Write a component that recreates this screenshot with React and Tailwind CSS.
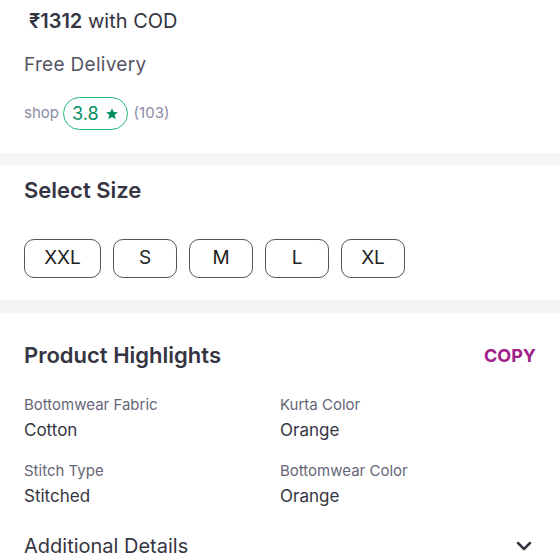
import { ChevronDown } from "lucide-react";

const sizes = [
  { label: "XXL", w: "w-[77px]" },
  { label: "S", w: "w-[64px]" },
  { label: "M", w: "w-[64px]" },
  { label: "L", w: "w-[64px]" },
  { label: "XL", w: "w-[64px]" },
];

const highlights = [
  { label: "Bottomwear Fabric", value: "Cotton" },
  { label: "Kurta Color", value: "Orange" },
  { label: "Stitch Type", value: "Stitched" },
  { label: "Bottomwear Color", value: "Orange" },
];

export default function App() {
  return (
    <div className="w-[560px] h-[560px] overflow-hidden bg-white text-[#353543]" style={{ fontFamily: "Inter, 'Noto Sans', sans-serif" }}>
      {/* price block */}
      <div className="px-6 pt-[8px] pb-[23px]">
        <div className="pl-[5px] text-[20px] leading-[26px]">
          <span className="font-semibold">₹1312</span> with COD
        </div>
        <div className="mt-[19px] text-[19px] leading-[24px] tracking-[0.3px] text-[#555566]">Free Delivery</div>
        <div className="mt-[20px] flex items-center gap-[4px]">
          <span className="text-[15px] text-[#8b8ba3]">shop</span>
          <span className="flex items-center gap-[6px] h-[33px] px-[8px] rounded-full border-[1.5px] border-[#23bb75] text-[#038d63] text-[18px]">
            3.8
            <svg width="14" height="14" viewBox="0 0 24 24" fill="#038d63">
              <path d="M12 2l2.9 6.6 7.1.6-5.4 4.7 1.6 7-6.2-3.7-6.2 3.7 1.6-7L2 9.2l7.1-.6z" />
            </svg>
          </span>
          <span className="ml-[2px] text-[15px] text-[#8b8ba3]">(103)</span>
        </div>
      </div>

      <div className="h-[12px] bg-[#f5f5f5]" />

      {/* size */}
      <div className="px-6 pt-[11px] pb-[22px]">
        <h2 className="text-[22px] leading-[28px] font-semibold">Select Size</h2>
        <div className="mt-[35px] flex gap-[12px]">
          {sizes.map((s) => (
            <div key={s.label} className={`${s.w} h-[39px] rounded-[10px] border border-[#555] flex items-center justify-center text-[19px] text-[#222]`}>
              {s.label}
            </div>
          ))}
        </div>
      </div>

      <div className="h-[13px] bg-[#f5f5f5]" />

      {/* highlights */}
      <div className="px-6 pt-[28px]">
        <div className="flex items-center justify-between">
          <h2 className="text-[22px] leading-[28px] font-semibold">Product Highlights</h2>
          <span className="text-[18px] font-bold text-[#9f2089]">COPY</span>
        </div>
        <div className="mt-[26px] grid grid-cols-2 gap-x-0 gap-y-[20px]">
          {highlights.map((h) => (
            <div key={h.label}>
              <div className="text-[15px] leading-[20px] text-[#666677]">{h.label}</div>
              <div className="mt-[4px] text-[17px] leading-[22px]">{h.value}</div>
            </div>
          ))}
        </div>
        <div className="mt-[26px] flex items-center justify-between">
          <span className="text-[20px] leading-[26px]">Additional Details</span>
          <ChevronDown size={24} strokeWidth={2.5} className="text-[#353543]" />
        </div>
      </div>
    </div>
  );
}
